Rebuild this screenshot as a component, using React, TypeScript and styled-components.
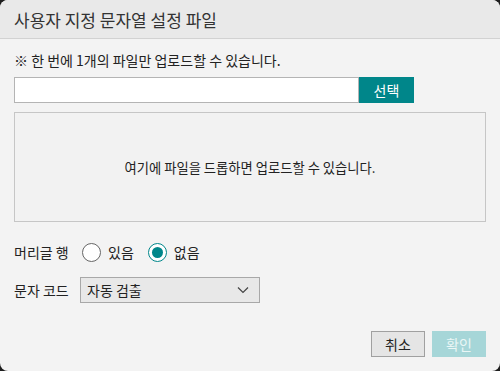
import React, { useState } from "react";
import styled, { createGlobalStyle } from "styled-components";

const Global = createGlobalStyle`
  html, body { margin: 0; padding: 0; background: #1e1e1e; }
  body { font-family: "Noto Sans CJK KR", "Noto Sans", sans-serif; }
  * { box-sizing: border-box; }
`;

const Dialog = styled.div`
  width: 500px;
  height: 371px;
  background: #f3f3f3;
  border-radius: 8px;
  overflow: hidden;
  display: flex;
  flex-direction: column;
  color: #222;
`;

const Header = styled.div`
  height: 39px;
  background: #e9e9e9;
  border-bottom: 1px solid #d2d2d2;
  display: flex;
  align-items: center;
  padding: 0 14px;
  font-size: 17px;
  color: #333;
`;

const Body = styled.div`
  flex: 1;
  display: flex;
  flex-direction: column;
  padding: 10px 14px 14px 14px;
`;

const Notice = styled.div`
  font-size: 14px;
  line-height: 20px;
  height: 20px;
  margin-top: 1px;
  color: #222;
`;

const FileRow = styled.div`
  display: flex;
  margin-top: 7px;
  height: 26px;
`;

const FileInput = styled.div`
  width: 345px;
  height: 26px;
  background: #fff;
  border: 1px solid #b4b4b4;
`;

const SelectButton = styled.button`
  width: 55px;
  height: 26px;
  border: none;
  background: #00868a;
  color: #fff;
  font-family: inherit;
  font-size: 14px;
  padding: 0;
`;

const DropZone = styled.div`
  margin-top: 9px;
  height: 110px;
  border: 1px solid #c6c6c6;
  background: #f2f2f2;
  display: flex;
  align-items: center;
  justify-content: center;
  font-size: 13.3px;
  color: #222;
`;

const Row = styled.div<{ $mt: number }>`
  display: flex;
  align-items: center;
  margin-top: ${(p) => p.$mt}px;
  font-size: 14px;
  height: 26px;
`;

const Label = styled.span<{ $w: number }>`
  width: ${(p) => p.$w}px;
  white-space: nowrap;
`;

const RadioCircle = styled.span<{ $checked: boolean }>`
  width: 19px;
  height: 19px;
  border-radius: 50%;
  border: 1.5px solid ${(p) => (p.$checked ? "#00868a" : "#666")};
  background: #fff;
  display: inline-flex;
  align-items: center;
  justify-content: center;
  margin-right: 7px;
  &::after {
    content: "";
    display: ${(p) => (p.$checked ? "block" : "none")};
    width: 11px;
    height: 11px;
    border-radius: 50%;
    background: #00868a;
  }
`;

const RadioOption = styled.label`
  display: inline-flex;
  align-items: center;
  margin-right: 14px;
  cursor: pointer;
`;

const Select = styled.div`
  width: 180px;
  height: 26px;
  border: 1px solid #a8a8a8;
  background: #e8e8e8;
  display: flex;
  align-items: center;
  justify-content: space-between;
  padding: 0 10px 0 6px;
  font-size: 14px;
`;

const Footer = styled.div`
  margin-top: auto;
  display: flex;
  justify-content: flex-end;
  gap: 7px;
`;

const FootButton = styled.button<{ $primary?: boolean }>`
  width: 54px;
  height: 26px;
  font-family: inherit;
  font-size: 14px;
  padding: 0;
  border: ${(p) => (p.$primary ? "none" : "1px solid #a0a0a0")};
  background: ${(p) => (p.$primary ? "#a6d6d8" : "#e5e5e5")};
  color: ${(p) => (p.$primary ? "#eaf6f6" : "#222")};
`;

export default function App() {
  const [header, setHeader] = useState("none");
  return (
    <>
      <Global />
      <Dialog>
        <Header>사용자 지정 문자열 설정 파일</Header>
        <Body>
          <Notice>※ 한 번에 1개의 파일만 업로드할 수 있습니다.</Notice>
          <FileRow>
            <FileInput />
            <SelectButton>선택</SelectButton>
          </FileRow>
          <DropZone>여기에 파일을 드롭하면 업로드할 수 있습니다.</DropZone>
          <Row $mt={17}>
            <Label $w={68}>머리글 행</Label>
            <RadioOption onClick={() => setHeader("yes")}>
              <RadioCircle $checked={header === "yes"} />
              있음
            </RadioOption>
            <RadioOption onClick={() => setHeader("none")}>
              <RadioCircle $checked={header === "none"} />
              없음
            </RadioOption>
          </Row>
          <Row $mt={12}>
            <Label $w={66}>문자 코드</Label>
            <Select>
              <span>자동 검출</span>
              <svg width="12" height="8" viewBox="0 0 12 8">
                <path d="M1 1.5 L6 6.5 L11 1.5" fill="none" stroke="#444" strokeWidth="1.2" />
              </svg>
            </Select>
          </Row>
          <Footer>
            <FootButton>취소</FootButton>
            <FootButton $primary>확인</FootButton>
          </Footer>
        </Body>
      </Dialog>
    </>
  );
}
